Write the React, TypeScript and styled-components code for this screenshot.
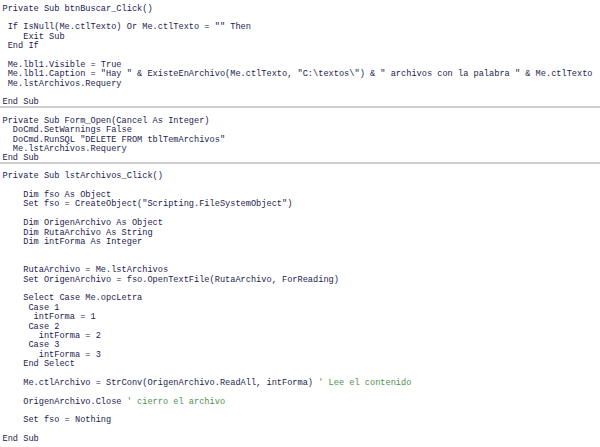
import React from "react";
import styled, { createGlobalStyle } from "styled-components";

const Global = createGlobalStyle`
  html, body { margin: 0; padding: 0; background: #ffffff; }
`;

const Page = styled.div`
  width: 600px;
  height: 447px;
  overflow: hidden;
  background: #ffffff;
  font-family: "Liberation Mono", "Courier New", monospace;
  font-size: 8.65px;
  color: #23234f;
`;

const Block = styled.div<{ $pt: number; $sep: boolean }>`
  padding-top: ${(p) => p.$pt}px;
  padding-left: 2.5px;
  border-bottom: ${(p) => (p.$sep ? "2px solid #cfcfcf" : "none")};
`;

const Line = styled.div`
  height: 9.4px;
  line-height: 9.4px;
  white-space: pre;
  &:last-child {
    height: 7.4px;
  }
`;

const Comment = styled.span`
  color: #4f8f4f;
`;

type L = string | [string, string];

const block1: L[] = [
  "Private Sub btnBuscar_Click()",
  "",
  " If IsNull(Me.ctlTexto) Or Me.ctlTexto = \"\" Then",
  "    Exit Sub",
  " End If",
  "",
  " Me.lbl1.Visible = True",
  " Me.lbl1.Caption = \"Hay \" & ExisteEnArchivo(Me.ctlTexto, \"C:\\textos\\\") & \" archivos con la palabra \" & Me.ctlTexto",
  " Me.lstArchivos.Requery",
  "",
  "End Sub",
];

const block2: L[] = [
  "Private Sub Form_Open(Cancel As Integer)",
  "  DoCmd.SetWarnings False",
  "  DoCmd.RunSQL \"DELETE FROM tblTemArchivos\"",
  "  Me.lstArchivos.Requery",
  "End Sub",
];

const block3: L[] = [
  "Private Sub lstArchivos_Click()",
  "",
  "    Dim fso As Object",
  "    Set fso = CreateObject(\"Scripting.FileSystemObject\")",
  "",
  "    Dim OrigenArchivo As Object",
  "    Dim RutaArchivo As String",
  "    Dim intForma As Integer",
  "",
  "",
  "    RutaArchivo = Me.lstArchivos",
  "    Set OrigenArchivo = fso.OpenTextFile(RutaArchivo, ForReading)",
  "",
  "    Select Case Me.opcLetra",
  "     Case 1",
  "      intForma = 1",
  "     Case 2",
  "       intForma = 2",
  "     Case 3",
  "       intForma = 3",
  "    End Select",
  "",
  ["    Me.ctlArchivo = StrConv(OrigenArchivo.ReadAll, intForma) ", "' Lee el contenido"],
  "",
  ["    OrigenArchivo.Close ", "' cierro el archivo"],
  "",
  "    Set fso = Nothing",
  "",
  "End Sub",
];

const renderLines = (lines: L[]) =>
  lines.map((l, i) =>
    typeof l === "string" ? (
      <Line key={i}>{l}</Line>
    ) : (
      <Line key={i}>
        {l[0]}
        <Comment>{l[1]}</Comment>
      </Line>
    )
  );

export default function App() {
  return (
    <>
      <Global />
      <Page>
        <Block $pt={4.5} $sep>
          {renderLines(block1)}
        </Block>
        <Block $pt={9} $sep>
          {renderLines(block2)}
        </Block>
        <Block $pt={8.5} $sep={false}>
          {renderLines(block3)}
        </Block>
      </Page>
    </>
  );
}
